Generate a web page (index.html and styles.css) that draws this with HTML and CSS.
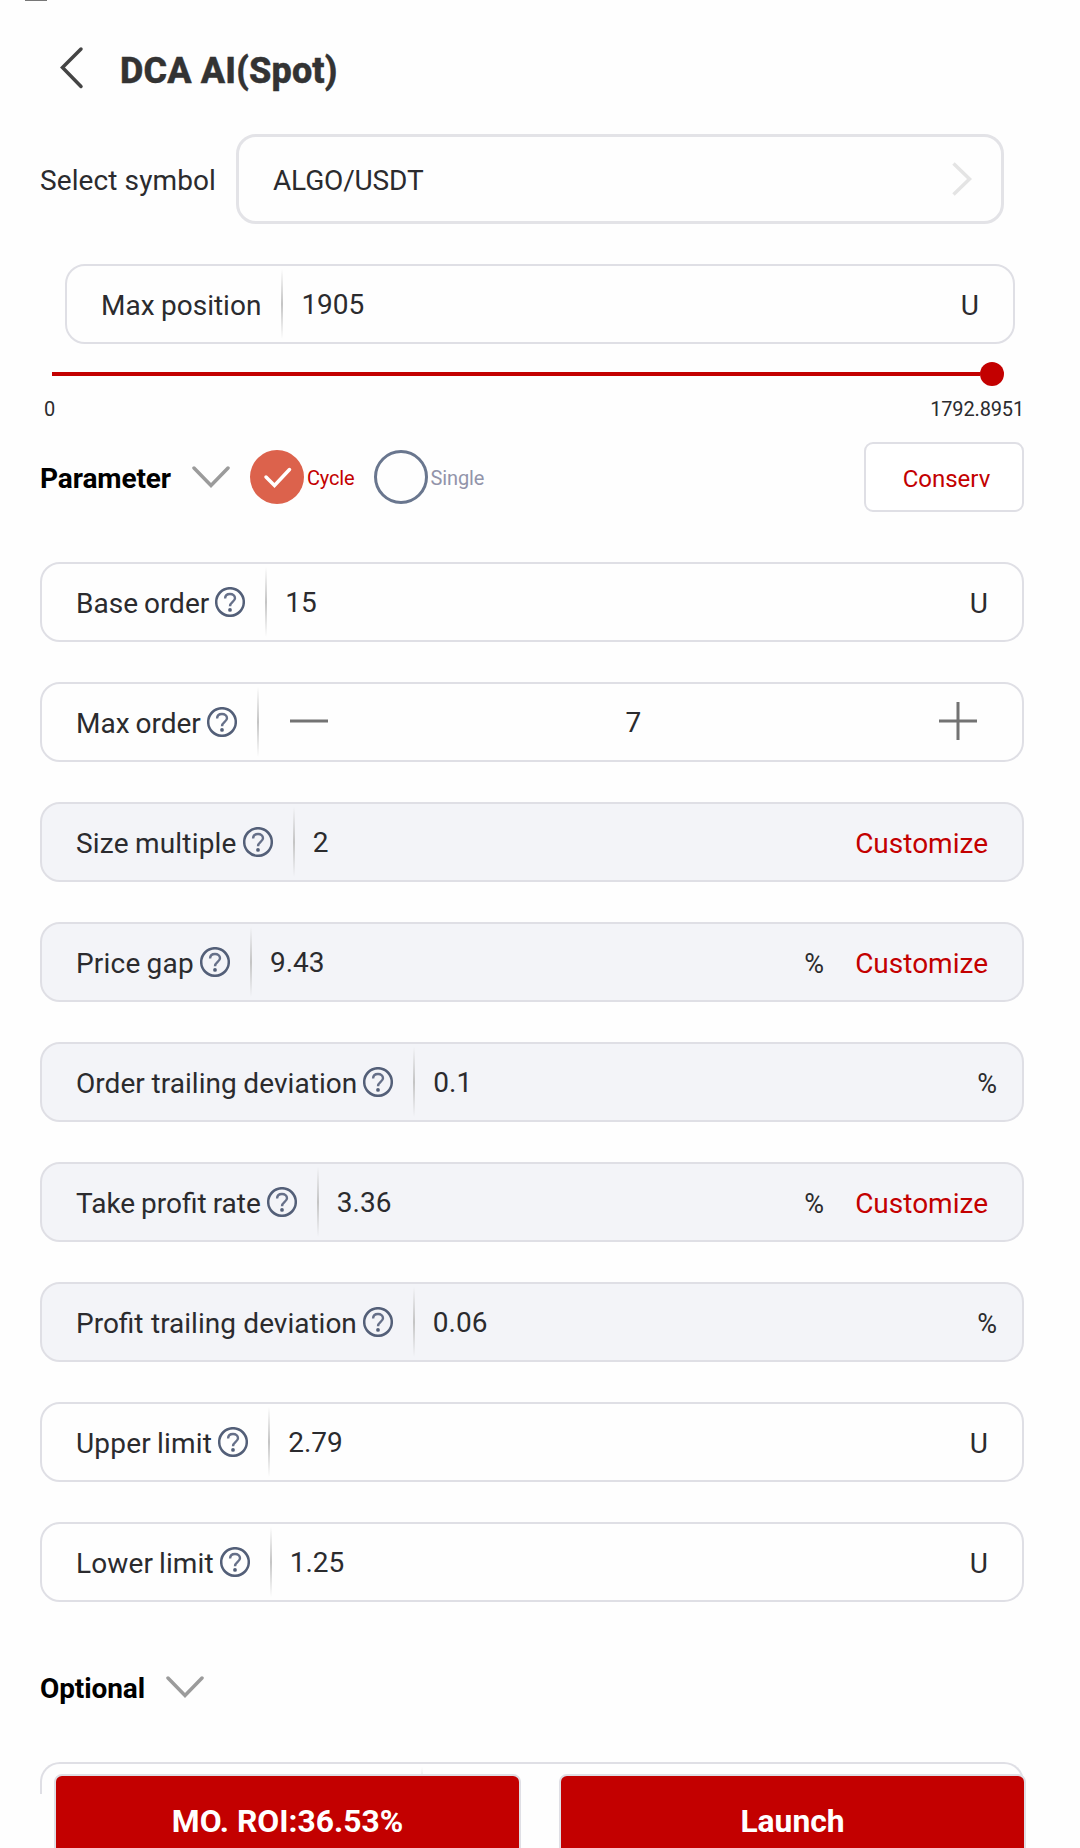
FILE: index.html
```html
<!DOCTYPE html>
<html lang="en">
<head>
<meta charset="utf-8">
<title>DCA AI(Spot)</title>
<link rel="stylesheet" href="styles.css">
</head>
<body>
<svg class="defs" width="0" height="0">
  <symbol id="help" viewBox="0 0 30 30">
    <circle cx="15" cy="15" r="13.800" fill="none" stroke="#535f78" stroke-width="2.500"/>
    <path d="M10.100 11.600C10.100 8.700 12.200 7 15 7s5 1.700 5 4.300c0 3.400-5 4-5 7.900" fill="none" stroke="#667089" stroke-width="2.400"/>
    <circle cx="15" cy="22.900" r="1.900" fill="#535f78"/>
  </symbol>
  <symbol id="down" viewBox="0 0 38 22">
    <path d="M2 2l17 17.500L36 2" fill="none" stroke="#9b9b9b" stroke-width="3.500" stroke-linecap="round"/>
  </symbol>
</svg>
<main class="screen">
  <div class="notch"></div>
  <header class="header">
    <svg class="back" width="24" height="42" viewBox="0 0 24 42"><path d="M21 2L2.500 20.500 21 39.500" fill="none" stroke="#444" stroke-width="3.500" stroke-linecap="round"/></svg>
    <h1 class="title">DCA AI(Spot)</h1>
  </header>

  <section class="symbol-row">
    <span class="symbol-label">Select symbol</span>
    <div class="symbol-box">
      <span class="symbol-name">ALGO/USDT</span>
      <svg width="20" height="34" viewBox="0 0 20 34"><path d="M1.500 1.500L17.500 17 1.500 32.500" fill="none" stroke="#e4e4e4" stroke-width="3.500"/></svg>
    </div>
  </section>

  <div class="field field-position">
    <span class="label label-position">Max position</span><i class="divider"></i>
    <span class="value">1905</span><span class="unit">U</span>
  </div>

  <div class="slider"><div class="track"></div><div class="thumb"></div></div>
  <div class="range"><span>0</span><span>1792.8951</span></div>

  <section class="param-row">
    <h2 class="heading">Parameter</h2>
    <svg class="chevron" width="38" height="22"><use href="#down"/></svg>
    <span class="radio radio-on"><svg width="54" height="54" viewBox="0 0 54 54"><path d="M16 27l8.500 8.500L39.500 19.500" fill="none" stroke="#fff" stroke-width="3.500" stroke-linecap="round"/></svg></span>
    <span class="radio-text cycle">Cycle</span>
    <span class="radio radio-off"></span>
    <span class="radio-text single">Single</span>
    <button class="mode">Conserv</button>
  </section>

  <section class="fields">
    <div class="field"><span class="label">Base order</span><svg class="help"><use href="#help"/></svg><i class="divider"></i><span class="value">15</span><span class="unit">U</span></div>
    <div class="field"><span class="label">Max order</span><svg class="help"><use href="#help"/></svg><i class="divider"></i>
      <svg class="step minus" width="38" height="38" viewBox="0 0 38 38"><path d="M0 19h38" stroke="#737373" stroke-width="3"/></svg>
      <span class="count">7</span>
      <svg class="step plus" width="38" height="38" viewBox="0 0 38 38"><path d="M0 19h38M19 0v38" stroke="#737373" stroke-width="3"/></svg>
    </div>
    <div class="field locked"><span class="label loose">Size multiple</span><svg class="help"><use href="#help"/></svg><i class="divider"></i><span class="value">2</span><span class="customize">Customize</span></div>
    <div class="field locked"><span class="label loose">Price gap</span><svg class="help"><use href="#help"/></svg><i class="divider"></i><span class="value">9.43</span><span class="percent">%</span><span class="customize">Customize</span></div>
    <div class="field locked"><span class="label snug">Order trailing deviation</span><svg class="help"><use href="#help"/></svg><i class="divider"></i><span class="value">0.1</span><span class="percent last">%</span></div>
    <div class="field locked"><span class="label">Take profit rate</span><svg class="help"><use href="#help"/></svg><i class="divider"></i><span class="value">3.36</span><span class="percent">%</span><span class="customize">Customize</span></div>
    <div class="field locked"><span class="label spaced">Profit trailing deviation</span><svg class="help"><use href="#help"/></svg><i class="divider"></i><span class="value">0.06</span><span class="percent last">%</span></div>
    <div class="field"><span class="label loose">Upper limit</span><svg class="help"><use href="#help"/></svg><i class="divider"></i><span class="value">2.79</span><span class="unit">U</span></div>
    <div class="field"><span class="label wide">Lower limit</span><svg class="help"><use href="#help"/></svg><i class="divider"></i><span class="value">1.25</span><span class="unit">U</span></div>
  </section>

  <section class="optional-row">
    <h2 class="heading">Optional</h2>
    <svg class="chevron" width="38" height="22"><use href="#down"/></svg>
  </section>
  <div class="field field-cut"><i class="divider"></i></div>

  <footer class="actions">
    <button class="action">MO. ROI:36.53%</button>
    <button class="action">Launch</button>
  </footer>
</main>
</body>
</html>
```
FILE: styles.css
```css
* { box-sizing: border-box; }
body { margin: 0; background: #fff; font-family: Roboto, sans-serif; font-size: 28px; line-height: 34px; color: #2b2b2e; }
.defs { display: block; height: 0; }
.screen { width: 1080px; height: 1848px; overflow: hidden; background: #fefefe; }
svg { display: block; flex: none; overflow: visible; }
h1, h2 { margin: 0; }
span { white-space: nowrap; }
button { font-family: inherit; cursor: pointer; }

.notch { width: 22px; height: 1px; margin-left: 25px; background: #777; }
.header { display: flex; align-items: flex-start; height: 133px; padding: 46px 0 0 60px; }
.title { margin: 0 0 0 36px; font-size: 36px; line-height: 44px; padding-top: 2px; font-weight: 800; letter-spacing: 0.15px; color: #333; -webkit-text-stroke: 0.4px #333; }

.symbol-row { display: flex; align-items: center; height: 90px; padding-left: 40px; }
.symbol-label { width: 196px; padding-top: 4px; letter-spacing: 0.1px; }
.symbol-box { display: flex; align-items: center; justify-content: space-between; width: 768px; height: 90px; padding: 0 29px 0 34px; border: 3px solid #e3e3e7; border-radius: 20px; }
.symbol-name { padding-top: 3px; letter-spacing: -0.15px; }

.field { display: flex; align-items: center; height: 80px; padding: 0 34px; border: 2px solid #dfdfe5; border-radius: 20px; }
.field-position { width: 950px; margin: 40px 0 0 65px; }
.label { padding-top: 4px; word-spacing: -1px; }
.label-position { word-spacing: -0.5px; }
.loose { letter-spacing: 0.2px; }
.snug { letter-spacing: 0.06px; word-spacing: -0.5px; }
.wide { letter-spacing: 0.11px; }
.spaced { word-spacing: 0.5px; }
.help { width: 30px; height: 30px; margin-left: 6px; }
.divider { flex: none; width: 2px; height: 70px; margin: 0 18px 0 20px; background: linear-gradient(transparent, #c4c4c4 50%, transparent); }
.value { flex: 1; padding-top: 2px; }
.unit { padding-top: 4px; }
.locked { background: #f3f4f8; }
.percent { margin-right: 31px; padding-top: 4px; font-size: 27px; }
.percent.last { margin-right: -9px; }
.customize { padding-top: 4px; color: #c30000; }
.step { margin-bottom: 2px; }
.minus { margin-left: 13px; }
.count { flex: 1; padding-top: 2px; text-align: center; }
.plus { margin-right: 11px; }

.slider { display: flex; align-items: center; height: 24px; margin: 18px 76px 0 52px; }
.track { flex: 1; height: 4px; background: #c30000; }
.thumb { width: 24px; height: 24px; border-radius: 50%; background: #c30000; }
.range { display: flex; justify-content: space-between; margin: 10px 56px 0 44px; font-size: 20px; line-height: 26px; letter-spacing: -0.15px; }

.param-row { display: flex; align-items: center; height: 70px; margin: 20px 56px 0 40px; }
.heading { font-size: 28px; line-height: 34px; font-weight: 700; letter-spacing: -0.1px; color: #000; }
.param-row .heading { padding-top: 3px; }
.chevron { margin-left: 21px; }
.radio { flex: none; width: 54px; height: 54px; border-radius: 50%; }
.radio-on { margin-left: 20px; background: #dc624c; }
.radio-off { margin-left: 19px; border: 3px solid #69768e; }
.radio-text { margin-left: 3px; padding-top: 2px; font-size: 20px; line-height: 26px; letter-spacing: -0.15px; }
.cycle { color: #c30000; }
.single { color: #9294aa; }
.mode { width: 160px; height: 70px; margin-left: auto; padding: 3px 0 0 5px; background: #fff; border: 2px solid #dfdfe5; border-radius: 9px; font-size: 24px; color: #c30000; }

.fields { display: flex; flex-direction: column; gap: 40px; margin: 50px 56px 0 40px; }
.optional-row { display: flex; align-items: center; height: 34px; margin: 70px 0 0 40px; }
.optional-row .chevron { margin-bottom: 5px; }
.field-cut { height: 32px; margin: 56px 56px 0 40px; padding-left: 359px; border-bottom: 0; border-radius: 20px 20px 0 0; overflow: hidden; align-items: flex-start; }
.field-cut .divider { margin-top: 3px; }
.actions { position: relative; display: flex; gap: 38px; height: 80px; margin: -20px 54px 0 54px; }
.action { flex: 1; height: 90px; padding: 4px 0 0; background: #c30000; border: 2px solid #dfdfe5; border-radius: 8px; font-size: 31.800px; font-weight: 700; color: #fff; }
```
